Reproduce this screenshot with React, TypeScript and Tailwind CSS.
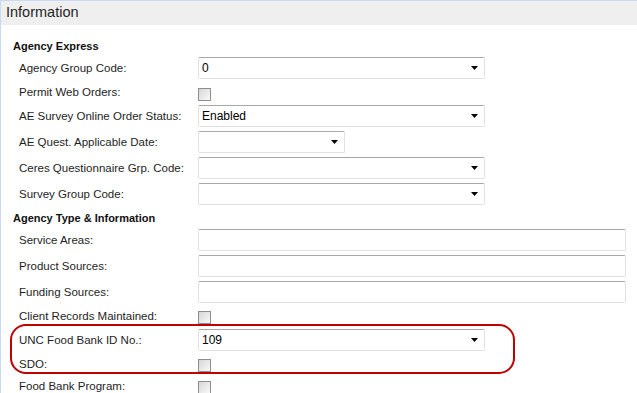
import React from "react";

const Arrow = () => (
  <svg width="7" height="4" viewBox="0 0 7 4" className="shrink-0">
    <path d="M0 0H7L3.5 4Z" fill="#000" />
  </svg>
);

const Box = ({ w, value, dropdown }: { w: string; value?: string; dropdown?: boolean }) => (
  <div
    className={`${w} h-[22px] flex items-center justify-between pl-[3px] pr-[6px] bg-white border border-[#e2e2e2] border-t-[#a8a8a8] rounded-[2px]`}
  >
    <span className="text-[12px] text-black">{value}</span>
    {dropdown && <Arrow />}
  </div>
);

const Check = ({ mt }: { mt: string }) => (
  <div className={`${mt} w-[13px] h-[13px] border border-[#8e8e8e] bg-gradient-to-br from-[#d6d6d6] to-[#fafafa]`} />
);

const InputRow = ({ label, children }: { label: string; children: React.ReactNode }) => (
  <div className="h-[26px] flex items-center">
    <div className="w-[197px] pl-[18px] pt-[2px] text-[#1e1e1e]">{label}</div>
    {children}
  </div>
);

const CheckRow = ({ label, mt }: { label: string; mt: string }) => (
  <div className="h-[22px] flex items-start">
    <div className="w-[197px] pl-[18px] h-[22px] flex items-center pt-[1px] text-[#1e1e1e]">{label}</div>
    <Check mt={mt} />
  </div>
);

export default function App() {
  return (
    <div className="relative w-[637px] h-[393px] overflow-hidden bg-white font-['Liberation_Sans',Arial,sans-serif] text-[11.5px]">
      <div className="h-full border-t border-l border-[#c7dcf2]">
        <div className="h-[24px] bg-[#efefef] flex items-center pl-[5px] text-[14.5px] text-[#262626]">
          Information
        </div>
        <div className="h-[8px]" />
        <div className="h-[22px] flex items-center pt-[4px] pl-[12px] font-bold text-[11px] text-[#111]">Agency Express</div>
        <InputRow label="Agency Group Code:">
          <Box w="w-[287px]" value="0" dropdown />
        </InputRow>
        <CheckRow label="Permit Web Orders:" mt="mt-[7px]" />
        <InputRow label="AE Survey Online Order Status:">
          <Box w="w-[287px]" value="Enabled" dropdown />
        </InputRow>
        <InputRow label="AE Quest. Applicable Date:">
          <Box w="w-[147px]" dropdown />
        </InputRow>
        <InputRow label="Ceres Questionnaire Grp. Code:">
          <Box w="w-[287px]" dropdown />
        </InputRow>
        <InputRow label="Survey Group Code:">
          <Box w="w-[287px]" dropdown />
        </InputRow>
        <div className="h-[20px] flex items-center pt-[3px] pl-[12px] font-bold text-[11px] text-[#111]">
          Agency Type &amp; Information
        </div>
        <InputRow label="Service Areas:">
          <Box w="w-[428px]" />
        </InputRow>
        <InputRow label="Product Sources:">
          <Box w="w-[428px]" />
        </InputRow>
        <InputRow label="Funding Sources:">
          <Box w="w-[428px]" />
        </InputRow>
        <CheckRow label="Client Records Maintained:" mt="mt-[6px]" />
        <InputRow label="UNC Food Bank ID No.:">
          <Box w="w-[287px]" value="109" dropdown />
        </InputRow>
        <CheckRow label="SDO:" mt="mt-[6px]" />
        <CheckRow label="Food Bank Program:" mt="mt-[6px]" />
      </div>
      <div className="absolute left-[10px] top-[324px] w-[505px] h-[50px] border-2 border-[#c00000] rounded-[16px] pointer-events-none" />
    </div>
  );
}
